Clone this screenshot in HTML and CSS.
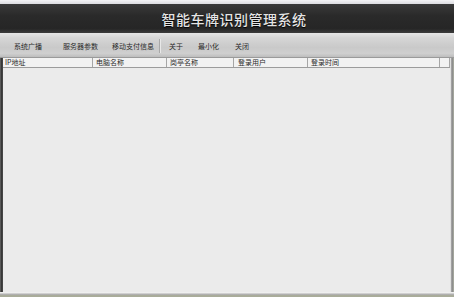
FILE: index.html
```html
<!DOCTYPE html>
<html lang="zh">
<head>
<meta charset="utf-8">
<link rel="stylesheet" href="styles.css">
</head>
<body>
<div class="app">
  <div class="topstrip"></div>
  <div class="header"><h1 class="title">智能车牌识别管理系统</h1></div>
  <div class="toolbar">
    <span class="tb tb1">系统广播</span>
    <span class="tb tb2">服务器参数</span>
    <span class="tb tb3">移动支付信息</span>
    <span class="sep"></span>
    <span class="tb tb4">关于</span>
    <span class="tb tb5">最小化</span>
    <span class="tb tb6">关闭</span>
  </div>
  <div class="gridwrap">
    <div class="leftedge"></div>
    <div class="grid">
      <div class="ghead">
        <div class="col c1">IP地址</div>
        <div class="col c2">电脑名称</div>
        <div class="col c3">岗亭名称</div>
        <div class="col c4">登录用户</div>
        <div class="col c5">登录时间</div>
        <div class="col c6"></div>
      </div>
      <div class="gbody"></div>
    </div>
    <div class="rightedge"></div>
  </div>
  <div class="bottom1"></div>
  <div class="bottom2"></div>
</div>
</body>
</html>
```
FILE: styles.css
```css
html, body {
  margin: 0;
  padding: 0;
  background: #ffffff;
}
.app {
  width: 454px;
  height: 297px;
  display: flex;
  flex-direction: column;
  font-family: "Noto Sans CJK SC", "Noto Sans", sans-serif;
  overflow: hidden;
}
.topstrip {
  height: 4px;
  background: linear-gradient(#f4f4f6, #dcdce0);
}
.header {
  height: 29px;
  background: linear-gradient(#3a3a3a, #2a2a2a 40%, #262626 85%, #3c3c3c);
  display: flex;
  align-items: center;
  justify-content: center;
}
.title {
  margin: 0 0 0 14px;
  font-size: 14px;
  font-weight: 500;
  letter-spacing: 0.5px;
  color: #e4e4e4;
  line-height: 1;
  text-shadow: 0 1px 1px #000;
}
.toolbar {
  height: 25px;
  background: linear-gradient(#e6e6e6, #d6d6d6 20%, #c9c9c9 60%, #cfcfcf 85%, #bdbdbd);
  display: flex;
  align-items: center;
  padding-top: 1px;
  font-size: 7px;
  color: #2a2a2a;
  border-bottom: 1px solid #9a9a9a;
  box-sizing: border-box;
}
.tb { white-space: nowrap; }
.tb1 { margin-left: 14px; }
.tb2 { margin-left: 21px; }
.tb3 { margin-left: 14px; }
.sep {
  width: 1px;
  height: 14px;
  margin-left: 5px;
  background: #a8a8a8;
  border-right: 1px solid #e8e8e8;
}
.tb4 { margin-left: 8px; }
.tb5 { margin-left: 15px; }
.tb6 { margin-left: 16px; }
.gridwrap {
  flex: 1;
  display: flex;
  min-height: 0;
}
.leftedge {
  width: 3px;
  background: linear-gradient(90deg, #6a6a6a, #2e2e2e 60%, #555);
}
.grid {
  width: 447px;
  display: flex;
  flex-direction: column;
  background: #ebebeb;
}
.ghead {
  height: 9px;
  display: flex;
  background: #f2f2f2;
  border-bottom: 1px solid #9c9c9c;
  font-size: 7px;
  line-height: 9px;
  color: #2a2a2a;
}
.col {
  box-sizing: border-box;
  border-right: 1px solid #a6a6a6;
  padding-left: 3px;
  white-space: nowrap;
  overflow: hidden;
}
.c1 { width: 90px; padding-left: 2px; }
.c2 { width: 74px; }
.c3 { width: 67px; }
.c4 { width: 74px; padding-left: 4px; }
.c5 { width: 132px; }
.c6 { width: 10px; }
.gbody { flex: 1; }
.rightedge {
  width: 4px;
  background: linear-gradient(90deg, #ffffff, #9a9a9a 40%, #8a8a8a 70%, #b4b8a8);
}
.bottom1 {
  height: 3px;
  background: linear-gradient(#ffffff, #a0a0a0);
}
.bottom2 {
  height: 2px;
  background: #a9ac9a;
}
```
